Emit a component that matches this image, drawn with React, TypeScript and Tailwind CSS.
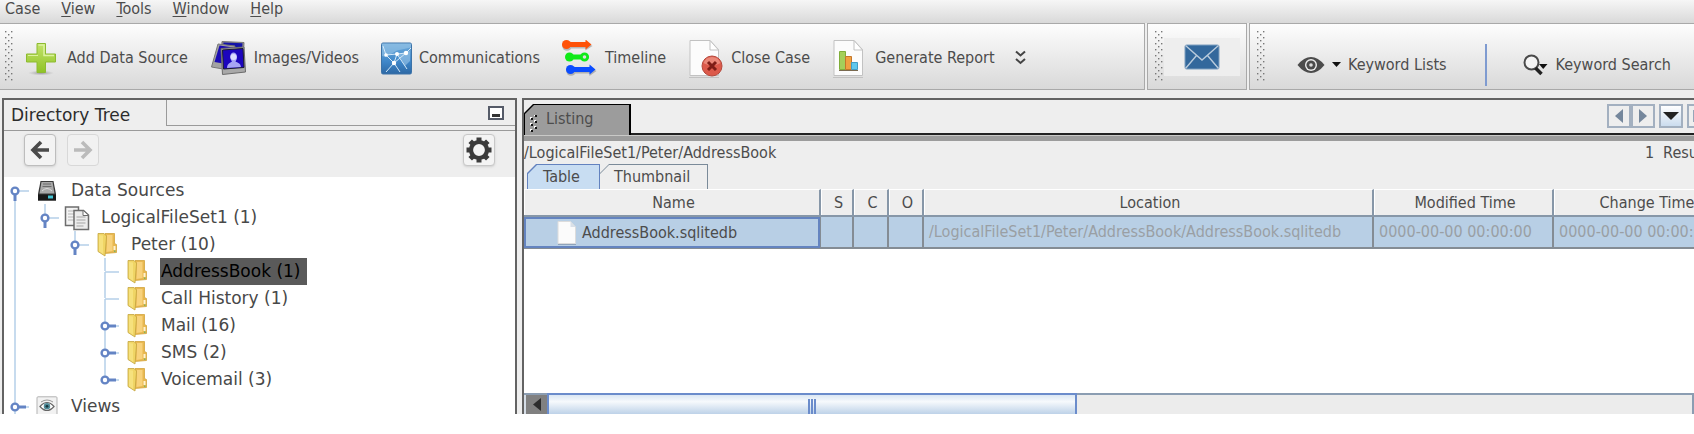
import React from 'react';

type IconProps = { className?: string };

const PlusIcon = () => (
  <svg width="34" height="36" viewBox="0 0 34 36" aria-hidden="true">
    <defs>
      <linearGradient id="plus" x1="0" y1="0" x2="0" y2="1">
        <stop offset="0" stopColor="#c3e36a" />
        <stop offset="1" stopColor="#8fc326" />
      </linearGradient>
      <radialGradient id="plusShadow">
        <stop offset="0" stopColor="#777" stopOpacity=".7" />
        <stop offset="1" stopColor="#999" stopOpacity="0" />
      </radialGradient>
    </defs>
    <ellipse cx="15" cy="33" rx="13" ry="2.5" fill="url(#plusShadow)" />
    <path d="M11 3.5h8.5v10.5H29.500v8H19.500v10.500H11V22H.5v-8H11z" fill="url(#plus)" stroke="#8dbb30" />
    <path d="M12.500 5h5.500v10.500h10" fill="none" stroke="#dcf2a0" strokeWidth="1.500" />
    <path d="M2 15.500h10" stroke="#dcf2a0" />
  </svg>
);

const ImagesIcon = () => (
  <svg width="37" height="36" viewBox="0 0 37 36" aria-hidden="true">
    <path d="M12 1.500l22 1-1 24-22-2z" fill="#8c8c8c" stroke="#777" />
    <path d="M13.500 2.500l19 .8-.3 4-19-.8z" fill="#1414a8" />
    <path d="M8 4l17 2-6 24L1.500 27z" fill="#a3a3a3" stroke="#777" />
    <path d="M9.500 5.500l14 2-4.500 17L4.500 22z" fill="#1a0bb4" />
    <path d="M11 8.500l23-1.500 1.500 25L12.500 34.500z" fill="#a9a9a9" stroke="#6c6c6c" />
    <path d="M12.500 10l20.500-1.500 1 19L13.500 29z" fill="#1c05bd" stroke="#1a1a30" />
    <path d="M17 28c.5-5 3-5 5-6.500-3-3.500-2-9 1.500-9s5 5.500 2 9c2 1.200 5 1.500 5.500 5.500z" fill="#a7a4f4" />
    <circle cx="23.500" cy="17" r="3" fill="#dcdcff" />
  </svg>
);

const CommIcon = () => (
  <svg width="31" height="36" viewBox="0 0 31 36" aria-hidden="true">
    <defs>
      <linearGradient id="comm" x1="0" y1="0" x2="0" y2="1">
        <stop offset="0" stopColor="#6fabdb" />
        <stop offset=".6" stopColor="#3f87c9" />
        <stop offset="1" stopColor="#2c68a4" />
      </linearGradient>
    </defs>
    <rect x=".5" y="3" width="30" height="31" rx="1.500" fill="url(#comm)" stroke="#3c73a8" />
    <path d="M1 3.500h29v4l-14 3L5 17l-4-1z" fill="#a8d0ee" opacity=".45" />
    <path d="M17 14l12-3v10l-5 5z" fill="#9cc6e8" opacity=".6" />
    <g fill="none" stroke="#d3e8f8">
      <path d="M5 15l11-1 9-1 5-5M16 14l-3 9L5 32M16 14l10 15M25 13l-12 10L5 15 2 6M13 23l6 9" />
    </g>
    <g fill="#fff">
      <circle cx="5" cy="15" r="1.800" />
      <circle cx="16" cy="14" r="2" />
      <circle cx="25" cy="13" r="2.200" />
      <circle cx="13" cy="23" r="2.200" />
    </g>
  </svg>
);

const TimelineIcon = () => (
  <svg width="36" height="36" viewBox="0 0 36 36" aria-hidden="true">
    <g fill="#555" opacity=".35" transform="translate(.5 1.500)">
      <circle cx="4.500" cy="4.500" r="4.800" />
      <path d="M5 2h18V0l7 4.500L23 9V7H5zM9 27h18v-2l7 4.500-7 5v-2.500H9z" />
      <circle cx="8.500" cy="29.500" r="4.800" />
    </g>
    <circle cx="4.500" cy="4.500" r="4.500" fill="#ff5208" />
    <path d="M4 2h19.500V-.5l6 5-6 5V7H4z" fill="#ff5208" />
    <circle cx="7.500" cy="17" r="4.500" fill="#10ea18" />
    <path d="M7 14.500h15v5H7z" fill="#10ea18" />
    <circle cx="22.500" cy="17" r="3.200" fill="#ddd" stroke="#10ea18" strokeWidth="2.800" />
    <circle cx="8.500" cy="29.500" r="4.500" fill="#0a4cff" />
    <path d="M8 27h19.500v-2.500l6 5-6 5V32H8z" fill="#0a4cff" />
  </svg>
);

const PageShape = () => (
  <>
    <path d="M2 1.500h20l8.500 9v26H2z" fill="#fcfcfc" stroke="#c2c2c2" />
    <path d="M22 1.500V11h8.500z" fill="#fff" stroke="#c2c2c2" />
    <path d="M1 38.500h30" stroke="#999" opacity=".4" />
  </>
);

const CloseCaseIcon = () => (
  <svg width="36" height="39" viewBox="0 0 36 39" aria-hidden="true">
    <PageShape />
    <circle cx="24" cy="27" r="10" fill="#dc5a4b" stroke="#b5483c" />
    <path d="M15.500 24a9 9 0 0 1 17 0c-5 3-12 3-17 0z" fill="#f09a8c" opacity=".7" />
    <path d="M20 23l8 8M28 23l-8 8" stroke="#7e1d16" strokeWidth="3" />
  </svg>
);

const ReportIcon = () => (
  <svg width="36" height="39" viewBox="0 0 36 39" aria-hidden="true">
    <PageShape />
    <path d="M7.500 12.500h6v18h-6z" fill="#a5cf5a" stroke="#7fae39" />
    <path d="M13.500 17.500h6v13h-6z" fill="#f0a041" stroke="#c4772a" />
    <path d="M19.500 23.500h6v7h-6z" fill="#5fc7ec" stroke="#3f9cc4" />
    <path d="M7 31.500h19" stroke="#7a6a50" />
  </svg>
);

const DoubleChevron = () => (
  <svg width="11" height="16" viewBox="0 0 11 16" aria-hidden="true">
    <path d="M1 1.500l4.500 4 4.500-4M1 9l4.500 4L10 9" fill="none" stroke="#444" strokeWidth="2" />
  </svg>
);

const MailIcon = () => (
  <svg width="36" height="26" viewBox="0 0 36 26" aria-hidden="true">
    <rect x="1" y="1" width="34" height="24" rx="1.500" fill="#33689c" stroke="#7f9fbf" />
    <path d="M1.500 1.500L18 16 34.500 1.500M1.500 24.500L12.500 11.500M34.500 24.500L23.500 11.500" fill="none" stroke="#b9cbdc" strokeWidth="1.400" />
  </svg>
);

const EyeIcon = () => (
  <svg width="28" height="18" viewBox="0 0 28 18" aria-hidden="true">
    <path d="M.5 9Q7 1 14 1t13.500 8Q21 17 14 17T.5 9z" fill="#4c4c4c" />
    <circle cx="14" cy="9" r="6" fill="#eee" />
    <circle cx="14" cy="9" r="4.600" fill="#4c4c4c" />
    <circle cx="14" cy="9" r="1.800" fill="#ddd" />
  </svg>
);

const Caret = () => (
  <svg width="9" height="5" viewBox="0 0 9 5" aria-hidden="true">
    <path d="M0 0h9L4.500 5z" fill="#111" />
  </svg>
);

const SearchIcon = () => (
  <svg width="25" height="22" viewBox="0 0 25 22" aria-hidden="true">
    <circle cx="8.500" cy="8.500" r="7" fill="#f4f4f4" stroke="#4a4a4a" strokeWidth="2" />
    <path d="M12.500 14l6 6" stroke="#222" strokeWidth="3.600" />
    <path d="M16 10h8.500l-4.300 5z" fill="#111" />
  </svg>
);

const ArrowLeft = ({ className }: IconProps) => (
  <svg width="20" height="20" viewBox="0 0 20 20" className={className} aria-hidden="true">
    <path d="M11 2L3 10l8 8M3 10h16" fill="none" stroke="currentColor" strokeWidth="3.600" />
  </svg>
);

const GearIcon = () => (
  <svg width="26" height="26" viewBox="0 0 26 26" aria-hidden="true">
    <circle cx="13" cy="13" r="8" fill="none" stroke="#3b3b3b" strokeWidth="4.200" />
    <g stroke="#3b3b3b" strokeWidth="5">
      <path d="M13 .5V4M13 22v3.500M.5 13H4M22 13h3.500M4.200 4.200l2.400 2.400M19.400 19.400l2.400 2.400M4.200 21.800l2.400-2.400M19.400 6.600l2.400-2.400" />
    </g>
  </svg>
);

const DriveIcon = () => (
  <svg width="20" height="20" viewBox="0 0 20 20" aria-hidden="true">
    <path d="M3.500 0h13L19 13v6.500H1V13z" fill="#3a3a3a" />
    <path d="M4.500 1h11l2 11.500h-15z" fill="#a9a9a9" />
    <path d="M6 3h8M5.500 5.500h9" stroke="#6b6b6b" />
    <path d="M5 10q5-5 10 0" fill="none" stroke="#ddd" />
    <path d="M1 13.500h18v6H1z" fill="#181818" />
    <path d="M11 14.500h5v3h-5z" fill="#43c5d4" />
  </svg>
);

const FileSetIcon = () => (
  <svg width="26" height="26" viewBox="0 0 26 26" aria-hidden="true">
    <path d="M1.500 2h13v18.500h-13z" fill="#f3f3f3" stroke="#6d6d6d" strokeWidth="1.500" />
    <path d="M4 6h7M4 9h6M4 12h6M4 15h6" stroke="#b5b5b5" />
    <path d="M10 5.500h9.500l5 4.500v14.500H10z" fill="#ececec" stroke="#6d6d6d" strokeWidth="1.500" />
    <path d="M19 6v4.500h5" fill="#fff" stroke="#6d6d6d" />
    <path d="M12.500 12h9M12.500 15h9M12.500 18h9M12.500 21h7" stroke="#a5a5a5" />
  </svg>
);

const FolderIcon = () => (
  <svg width="20" height="25" viewBox="0 0 20 25" aria-hidden="true">
    <path d="M8 1.500h9.500v10l2 1v8l-12 1z" fill="#e9b850" stroke="#d2a53e" strokeWidth=".8" />
    <path d="M10 3h5.500v16l-6 1z" fill="#f8d27c" />
    <path d="M16.500 14h2v4h-2z" fill="#fff3d0" />
    <path d="M17 18.500h1.500v1.500H17z" fill="#7fb560" />
    <path d="M1 1.500h6L9.500 4v1l-1.500 19L1 19.500z" fill="#f0d565" stroke="#c4a540" strokeWidth=".8" />
    <path d="M2 3l4 .5V22l-4-3z" fill="#f8e588" opacity=".7" />
  </svg>
);

const ViewsIcon = () => (
  <svg width="22" height="22" viewBox="0 0 22 22" aria-hidden="true">
    <rect x="1" y=".8" width="20" height="20.400" rx="1" fill="#f2f2f2" stroke="#b3b3b3" />
    <path d="M4 10.500Q7.500 6.500 11 6.500t7 4Q14.500 14.500 11 14.500T4 10.500z" fill="#fff" stroke="#666" strokeWidth="1.200" />
    <circle cx="11" cy="10.300" r="3.200" fill="#4f8a97" />
    <circle cx="11" cy="10.300" r="1.400" fill="#18363d" />
    <path d="M5 6q6-4 12 0" fill="none" stroke="#999" />
  </svg>
);

const FileIcon = () => (
  <svg width="20" height="24" viewBox="0 0 20 24" aria-hidden="true">
    <path d="M1 .5h12.500L18.500 6v16.500H1z" fill="#fbfbfb" stroke="#dcdcdc" />
    <path d="M13.500.5V6h5z" fill="#d9e0e8" />
    <path d="M1 23.500h18" stroke="#8fa3ba" />
  </svg>
);

const Grip = ({ id }: { id: string }) => (
  <svg width="9" height="51" className="shrink-0" aria-hidden="true">
    <defs>
      <pattern id={id} width="6" height="6" patternUnits="userSpaceOnUse">
        <rect width="1.400" height="1.400" fill="#777" />
        <rect x="3" y="3" width="1.400" height="1.400" fill="#777" />
      </pattern>
    </defs>
    <rect width="9" height="51" fill={`url(#${id})`} />
  </svg>
);

const menus = ['Case', 'View', 'Tools', 'Window', 'Help'];

const actions = [
  { label: 'Add Data Source', Icon: PlusIcon },
  { label: 'Images/Videos', Icon: ImagesIcon },
  { label: 'Communications', Icon: CommIcon },
  { label: 'Timeline', Icon: TimelineIcon },
  { label: 'Close Case', Icon: CloseCaseIcon },
  { label: 'Generate Report', Icon: ReportIcon },
];

type TreeNode = {
  label: string;
  Icon: () => React.ReactElement;
  leaf?: boolean;
  selected?: boolean;
  children?: TreeNode[];
};

const tree: TreeNode[] = [
  {
    label: 'Data Sources',
    Icon: DriveIcon,
    children: [
      {
        label: 'LogicalFileSet1 (1)',
        Icon: FileSetIcon,
        children: [
          {
            label: 'Peter (10)',
            Icon: FolderIcon,
            children: [
              { label: 'AddressBook (1)', Icon: FolderIcon, leaf: true, selected: true },
              { label: 'Call History (1)', Icon: FolderIcon, leaf: true },
              { label: 'Mail (16)', Icon: FolderIcon },
              { label: 'SMS (2)', Icon: FolderIcon },
              { label: 'Voicemail (3)', Icon: FolderIcon },
            ],
          },
        ],
      },
    ],
  },
  { label: 'Views', Icon: ViewsIcon },
];

const Guide = ({ line }: { line: boolean }) => (
  <svg width="30" height="27" className="shrink-0" aria-hidden="true">
    {line && <path d="M11 0v27" stroke="#b4cfe9" strokeWidth="1.500" />}
  </svg>
);

const Handle = ({ node, above, below }: { node: TreeNode; above: boolean; below: boolean }) => (
  <svg width="30" height="27" className="shrink-0" aria-hidden="true">
    {above && <path d="M11 0v13" stroke="#b4cfe9" strokeWidth="1.500" />}
    {below && <path d="M11 14v13" stroke="#b4cfe9" strokeWidth="1.500" />}
    <path d="M11 14h14" stroke="#b4cfe9" strokeWidth="1.500" />
    {!node.leaf && (
      <>
        <path d={node.children ? 'M11 16v8' : 'M14 14h8'} stroke="#6484c4" strokeWidth="3" />
        <circle cx="11" cy="14" r="3.400" fill="#fff" stroke="#6484c4" strokeWidth="2.400" />
      </>
    )}
  </svg>
);

const TreeItem = ({ node, guides, first, last }: { node: TreeNode; guides: boolean[]; first: boolean; last: boolean }) => (
  <li role="treeitem" aria-selected={!!node.selected} aria-expanded={node.leaf ? undefined : !!node.children}>
    <div className="flex h-[27px] items-center">
      {guides.map((line, i) => (
        <Guide key={i} line={line} />
      ))}
      <Handle node={node} above={!first} below={!last} />
      <span className="mr-[10px] flex w-[26px] shrink-0 justify-center">
        <node.Icon />
      </span>
      <button
        type="button"
        className={`h-[27px] pl-px pr-[6px] text-left leading-[27px] whitespace-nowrap ${node.selected ? 'bg-[#5a5a5a] text-black' : 'text-[#484848]'}`}
      >
        {node.label}
      </button>
    </div>
    {node.children && (
      <ul role="group">
        {node.children.map((child, i) => (
          <TreeItem
            key={child.label}
            node={child}
            guides={[...guides, !last]}
            first={false}
            last={i === node.children!.length - 1}
          />
        ))}
      </ul>
    )}
  </li>
);

const toolPanel = 'flex border border-[#a9a9a9] bg-gradient-to-b from-[#fdfdfd] to-[#d9d9d9]';

const columns = [
  { title: 'Name', width: 'w-[297px]' },
  { title: 'S', width: 'w-[33px]' },
  { title: 'C', width: 'w-[35px]' },
  { title: 'O', width: 'w-[35px]' },
  { title: 'Location', width: 'w-[450px]' },
  { title: 'Modified Time', width: 'w-[180px]' },
  { title: 'Change Time', width: 'w-[184px]' },
];

const cells = ['', '', '', '/LogicalFileSet1/Peter/AddressBook/AddressBook.sqlitedb', '0000-00-00 00:00:00', '0000-00-00 00:00:00'];

const cut = '[clip-path:polygon(9px_0,100%_0,100%_100%,0_100%,0_9px)]';
const navButton = 'flex size-6 items-center justify-center border-2 border-[#a3b0c0]';

function Toolbars() {
  return (
    <div className="flex h-[67px] shrink-0 gap-[2px]">
      <div role="toolbar" aria-label="Case" className={`${toolPanel} w-[1145px] shrink-0 items-center border-l-0 pl-[5px]`}>
        <Grip id="gripCase" />
        <div className="ml-3 flex items-center gap-[22px] pt-[3px]">
          {actions.map(({ label, Icon }) => (
            <button key={label} type="button" className="flex items-center gap-[7px] whitespace-nowrap">
              <Icon />
              {label}
            </button>
          ))}
        </div>
        <button type="button" aria-label="More" className="ml-5 pt-[3px]">
          <DoubleChevron />
        </button>
      </div>
      <div role="toolbar" aria-label="Messages" className={`${toolPanel} w-[100px] shrink-0 items-center pl-[7px]`}>
        <Grip id="gripMail" />
        <button type="button" aria-label="Messages" className="flex h-[38px] w-[76px] items-center justify-center bg-[#eeeeee]">
          <MailIcon />
        </button>
      </div>
      <div role="toolbar" aria-label="Keywords" className={`${toolPanel} flex-1 items-center border-r-0 pl-[7px]`}>
        <Grip id="gripKeys" />
        <div className="ml-[31px] flex shrink-0 items-center pt-4">
          <button type="button" className="flex items-center gap-[7px] whitespace-nowrap">
            <EyeIcon />
            <Caret />
            Keyword Lists
          </button>
          <div className="mr-9 ml-[38px] h-[42px] w-[2px] bg-[#7f9bd0]" />
          <button type="button" className="flex items-center gap-2 whitespace-nowrap">
            <SearchIcon />
            Keyword Search
          </button>
        </div>
      </div>
    </div>
  );
}

function DirectoryTree() {
  return (
    <section className="flex w-[515px] shrink-0 flex-col border-2 border-b-0 border-[#636363] bg-[#eeeeee] font-['DejaVu_Sans',sans-serif] text-[17px]">
      <div className="flex h-[30px] shrink-0">
        <h2 className="w-[162px] pl-[7px] leading-[30px] text-[#2c2c2c]">Directory Tree</h2>
        <div className="mb-1 flex flex-1 items-center justify-end border-b border-l border-[#9a9a9a] pr-[11px]">
          <button type="button" aria-label="Minimize" className="flex h-[14px] w-4 items-end justify-center border-2 border-[#555b68] bg-white pb-px">
            <span className="h-[3px] w-2 bg-[#333]" />
          </button>
        </div>
      </div>
      <div className="flex h-[47px] shrink-0 items-start justify-between border-t border-[#9a9a9a] px-5 pt-[3px]">
        <div className="flex gap-[11px]">
          <button type="button" aria-label="Back" className="flex size-8 items-center justify-center rounded-sm border border-[#bdbdbd] bg-[#f3f3f3] shadow-sm">
            <ArrowLeft className="text-[#4a4a4a]" />
          </button>
          <button type="button" aria-label="Forward" className="flex size-8 items-center justify-center rounded-sm border border-[#d8d8d8] bg-[#f1f1f1]">
            <ArrowLeft className="rotate-180 text-[#bbbbbb]" />
          </button>
        </div>
        <button type="button" aria-label="Settings" className="flex size-8 items-center justify-center rounded-sm border border-[#c8c8c8] bg-[#f4f4f4] shadow-sm">
          <GearIcon />
        </button>
      </div>
      <ul role="tree" aria-label="Directory Tree" className="min-h-0 flex-1 overflow-hidden bg-white">
        {tree.map((node, i) => (
          <TreeItem key={node.label} node={node} guides={[]} first={i === 0} last={false} />
        ))}
      </ul>
    </section>
  );
}

function Listing() {
  return (
    <section className="-mr-8 flex min-w-0 flex-1 flex-col overflow-hidden border-t-2 border-l-2 border-[#636363] bg-[#eeeeee]">
      <div className="flex h-[35px] shrink-0 items-end">
        <button type="button" className={`h-[31px] w-[107px] bg-black pt-px pr-[2px] pl-px ${cut}`}>
          <span className={`flex h-full items-start bg-[#9c9c9c] pt-[2px] pl-1 leading-6 ${cut}`}>
            <svg width="8" height="21" className="mt-2 mr-[9px]" aria-hidden="true">
              {[0, 6, 12].map((y) => (
                <g key={y}>
                  <path d={`M1 ${y + 3}h2M5 ${y}h2`} stroke="#fff" strokeWidth="2" />
                  <path d={`M2 ${y + 4}h2M6 ${y + 1}h2`} stroke="#111" strokeWidth="2" />
                </g>
              ))}
            </svg>
            Listing
          </span>
        </button>
        <div className="flex h-[31px] flex-1 items-start justify-end border-b-2 border-[#222] pr-[15px]">
          <div className="flex gap-1">
            <div className="flex">
              <button type="button" aria-label="Previous" className={navButton}>
                <svg width="8" height="14" aria-hidden="true"><path d="M8 0v14L0 7z" fill="#75879c" /></svg>
              </button>
              <button type="button" aria-label="Next" className={navButton}>
                <svg width="8" height="14" aria-hidden="true"><path d="M0 0v14l8-7z" fill="#75879c" /></svg>
              </button>
            </div>
            <button type="button" aria-label="Documents" className={`${navButton} bg-gradient-to-b from-white to-[#cbdcee]`}>
              <svg width="16" height="8" aria-hidden="true"><path d="M0 0h16L8 8z" fill="#222" /></svg>
            </button>
            <button type="button" aria-label="Maximize" className={navButton}>
              <span className="size-3 border-2 border-[#97a5b8]" />
            </button>
          </div>
        </div>
      </div>
      <div className="h-[6px] shrink-0 border-t border-[#c9c9c7] bg-[#9c9c9c]" />
      <div className="flex h-[23px] shrink-0 items-center justify-between pr-[11px] whitespace-nowrap">
        <span>/LogicalFileSet1/Peter/AddressBook</span>
        <span className="flex gap-[9px]">
          <span>1</span>
          <span>Results</span>
        </span>
      </div>
      <div role="tablist" className="flex h-[25px] shrink-0 pl-[3px]">
        <button type="button" role="tab" aria-selected="true" className={`w-[73px] bg-[#6382bf] pt-px pr-px pl-px ${cut}`}>
          <span className={`block h-full bg-[#c8ddf2] pl-[15px] text-left leading-[23px] ${cut}`}>Table</span>
        </button>
        <button type="button" role="tab" aria-selected="false" className={`w-[108px] bg-[#7a8a99] pt-px pr-px ${cut}`}>
          <span className={`block h-full bg-[#eeeeee] pl-[14px] text-left leading-[23px] ${cut}`}>Thumbnail</span>
        </button>
      </div>
      <div id="listing" className="min-h-0 flex-1 overflow-hidden bg-white">
        <table className="w-[1214px] table-fixed border-separate border-spacing-0">
          <thead>
            <tr className="h-7">
              {columns.map((c) => (
                <th
                  key={c.title}
                  scope="col"
                  className={`${c.width} border-t border-r-2 border-b-2 border-t-white border-r-[#8797a8] border-b-[#8797a8] bg-[#eeeeee] p-0 pl-1 text-center font-normal shadow-[inset_1px_0_#fff]`}
                >
                  {c.title}
                </th>
              ))}
            </tr>
          </thead>
          <tbody>
            <tr className="h-8 bg-[#b8cfe5]">
              <td className="border-r border-b border-[#848c94] p-0">
                <span className="flex h-[31px] items-center gap-[5px] border-2 border-[#6484c0] pl-[31px]">
                  <FileIcon />
                  AddressBook.sqlitedb
                </span>
              </td>
              {cells.map((text, i) => (
                <td key={i} className="overflow-hidden border-r-2 border-b-2 border-[#848c94] p-0 pl-[5px] whitespace-nowrap text-[#9a9fa4]">
                  {text}
                </td>
              ))}
            </tr>
          </tbody>
        </table>
      </div>
      <div className="flex h-[21px] shrink-0 border-t-2 border-[#8b9db2] bg-[#ececec]">
        <button type="button" aria-label="Scroll left" className="flex w-[23px] items-center justify-center border-l-2 border-[#d5dde6] bg-[#808080]">
          <svg width="8" height="13" aria-hidden="true"><path d="M8 0v13L0 6.500z" fill="#2c2c2c" /></svg>
        </button>
        <div
          role="scrollbar"
          aria-label="Horizontal"
          aria-controls="listing"
          aria-valuenow={0}
          className="-mt-[2px] flex w-[530px] items-end justify-center gap-px border-2 border-b-0 border-[#6b8ccb] bg-gradient-to-b from-[#dbe7f3] via-[#f6f9fc] via-35% to-[#bed2e8]"
        >
          <span className="h-[15px] w-[2px] bg-[#6b8ccb]" />
          <span className="h-[15px] w-[2px] bg-[#6b8ccb]" />
          <span className="h-[15px] w-[2px] bg-[#6b8ccb]" />
        </div>
        <div className="flex-1" />
        <button type="button" aria-label="Scroll right" className="w-[34px] border-l-2 border-[#8b9db2]" />
      </div>
    </section>
  );
}

export default function App() {
  return (
    <div className="h-screen overflow-hidden bg-white pb-5 font-['DejaVu_Sans_Condensed','DejaVu_Sans',sans-serif] text-base text-[#4c4c4c]">
      <div className="flex h-full flex-col overflow-hidden bg-[#eeeeee]">
        <nav className="flex h-[23px] shrink-0 items-start gap-[21px] bg-gradient-to-b from-[#f6f6f6] to-[#d9d9d9] pl-[5px]">
          {menus.map((m) => (
            <button key={m} type="button" className="leading-[18px]">
              {m === 'Case' ? m : (
                <>
                  <span className="underline underline-offset-2">{m[0]}</span>
                  {m.slice(1)}
                </>
              )}
            </button>
          ))}
        </nav>
        <Toolbars />
        <div className="mt-2 flex min-h-0 flex-1 gap-[5px] pl-[2px]">
          <DirectoryTree />
          <Listing />
        </div>
      </div>
    </div>
  );
}
